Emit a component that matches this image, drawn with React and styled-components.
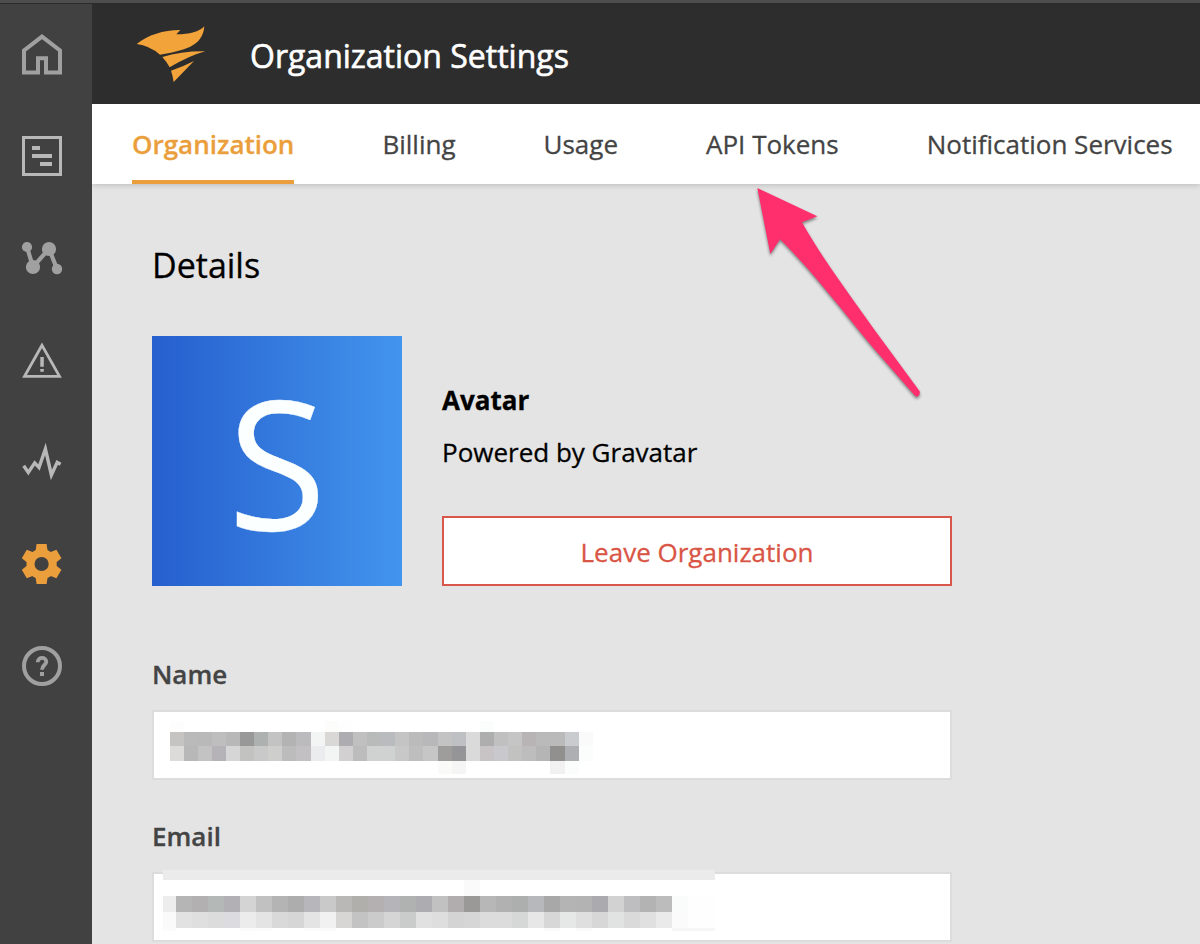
import React from "react";
import styled, { createGlobalStyle } from "styled-components";

const GlobalStyle = createGlobalStyle`
  * { box-sizing: border-box; }
  body {
    margin: 0;
    overflow: hidden;
    background: #e4e4e4;
    font-family: "Open Sans", "Noto Sans", sans-serif;
    font-size: 26px;
    color: #000;
    -webkit-text-stroke: 0.3px currentColor;
  }
`;

const Page = styled.div`
  height: 944px;
  display: flex;
  flex-direction: column;
  overflow: hidden;
`;

const WindowEdge = styled.div`
  flex: none;
  height: 4px;
  background: #4e4e4e;
  border-bottom: 1px solid #2b2b2b;
`;

const Body = styled.div`
  flex: 1;
  min-height: 0;
  display: flex;
`;

const Sidebar = styled.nav`
  position: relative;
  z-index: 1;
  flex: none;
  width: 92px;
  padding: 30px 0 0 22px;
  background: #414141;
  display: flex;
  flex-direction: column;
  gap: 62px;
`;

const NavIcon = styled.svg`
  flex: none;
  display: block;
  width: 40px;
  height: 40px;
  overflow: visible;
  color: ${(p) => p.$tone || "#a0a0a0"};
`;

const Main = styled.main`
  flex: 1;
  min-width: 0;
  display: flex;
  flex-direction: column;
`;

const Header = styled.header`
  position: relative;
  z-index: 1;
  flex: none;
  height: 100px;
  padding-left: 44px;
  background: #2d2d2d;
  display: flex;
  align-items: center;
  gap: 44px;
`;

const Logo = styled.svg`
  display: block;
  width: 70px;
  height: 56px;
  fill: #f2a33a;
`;

const Title = styled.h1`
  margin: 4px 0 0;
  font-size: 32px;
  font-weight: 400;
  line-height: 44px;
  color: #fff;
  white-space: nowrap;
  -webkit-text-stroke-width: 0.6px;
`;

const Tabs = styled.div`
  flex: none;
  height: 80px;
  padding-left: 40px;
  background: #fff;
  display: flex;
  gap: 88px;
  box-shadow: 0 1px 6px rgba(0, 0, 0, 0.18);
`;

const Tab = styled.a`
  height: 80px;
  line-height: 80px;
  white-space: nowrap;
  color: ${(p) => (p.$active ? "#eb9f3c" : "#444")};
  font-weight: ${(p) => (p.$active ? 600 : 400)};
  box-shadow: ${(p) => (p.$active ? "inset 0 -4px #eb9f3c" : "none")};
`;

const Content = styled.section`
  padding: 57px 60px 0;
  display: flex;
  flex-direction: column;
`;

const SectionTitle = styled.h2`
  margin: 0 0 47px;
  font-size: 34px;
  line-height: 48px;
  font-weight: 400;
`;

const Profile = styled.div`
  width: 800px;
  height: 250px;
  display: flex;
  gap: 40px;
`;

const Avatar = styled.div`
  flex: none;
  width: 250px;
  height: 250px;
  background: linear-gradient(90deg, #265fce, #2f70d8 33%, #3983e2 66%, #4294ef);
  color: #fbffff;
  font-size: 180px;
  line-height: 250px;
  text-align: center;
`;

const ProfileInfo = styled.div`
  flex: 1;
  display: flex;
  flex-direction: column;
  justify-content: flex-end;
`;

const AvatarTitle = styled.div`
  font-weight: 700;
  line-height: 36px;
`;

const AvatarNote = styled.div`
  margin: 16px 0 46px;
  line-height: 36px;
`;

const LeaveButton = styled.button`
  height: 70px;
  padding: 2px 0 0;
  border: 2px solid #d9574a;
  background: #fff;
  color: #d95545;
  font: inherit;
`;

const Field = styled.div`
  width: 800px;
  margin-top: ${(p) => p.$top}px;
`;

const Label = styled.div`
  line-height: 36px;
  margin-bottom: 18px;
  font-weight: 600;
  color: #444;
`;

const Input = styled.div`
  position: relative;
  height: 70px;
  border: 2px solid #dcdcdc;
  background: #fff;
`;

const Redaction = styled.div`
  position: absolute;
  left: ${(p) => p.$left}px;
  top: ${(p) => p.$top}px;
`;

const RedactionRow = styled.div`
  display: flex;
  height: ${(p) => p.$height}px;
`;

const Cell = styled.i`
  flex: none;
  width: ${(p) => p.$width}px;
  background: ${(p) => p.$color};
`;

const Pointer = styled.svg`
  position: absolute;
  left: 740px;
  top: 170px;
  width: 200px;
  height: 240px;
  filter: drop-shadow(0 2px 1.5px rgba(0, 0, 0, 0.45));
`;

const sparse = (count, marks) =>
  Array.from({ length: count }, (_, i) => marks[i] || "fff");

const nameRows = [
  { height: 11, cells: sparse(30, { 0: "fdfdfd", 11: "fcfcfa", 12: "fefefe", 22: "fbfdfc" }) },
  {
    height: 14,
    cells: "c5c4c2 bababa b9b9b9 bebebe b8b8b8 989898 adb1b0 c3c3c3 b3b3b3 bbbabd f3f5f4 d9d8d6 adadb1 c0c0c0 b9bbba b9bbbe c4c4c4 bbbbbb b8b8bb c3c3c3 bfc0c3 dadada aeaeae c0c0c0 c5c5c5 b8b4b5 bababa bababa cacbce fafafa".split(" "),
  },
  {
    height: 15,
    cells: "dcdbda b8b8b8 c3c3c3 b5b3b7 d6d6d6 c2c2c0 c9c9c9 cececc bcbcbc c3c0c3 ebecee f3f5f4 d3d0d2 bcbcbc cfd2d1 cfd2d1 c8c8c8 bebebe c6c6c6 9e9d9b 959597 dadada c8c4c6 c9c9cd c2c3c0 bdbdbd b5b5b5 91908e adafb2 fbfdfc".split(" "),
  },
  { height: 13, cells: sparse(30, { 19: "fafaf9", 20: "f5f5f5", 27: "f1f1f1", 28: "fbfdfd" }) },
];

const emailRows = [
  { height: 10, cells: Array(35).fill("ebebeb") },
  { height: 16, cells: sparse(35, { 19: "fafafa" }) },
  {
    height: 16,
    cells: "ededed b5b5b5 b3b0b1 b4b8b6 b2b0b4 d4d4d4 c1c1c1 b4b4b4 adadad b7b7bb c9c9c9 b9b8b6 b0afac b4b0b1 b5b5b9 afb2b1 adadb1 c1c1c1 b1adaf 9b9898 b7b7b7 b1b1b1 acafad b6b8bb a8a8a8 b4b4b4 b3b3b3 ababaf d2d2d2 bebec1 b3b3b3 bcbcbc f9fcfb fefefe fefefe".split(" "),
  },
  {
    height: 16,
    cells: "fafafa e2e2e2 dfdfdf dcdcdc dcdce0 ececec e4e4e4 d9d9d9 d6d6d6 e4e4e4 f1f1f1 d7d6d4 c3c3c3 cbcbcb d5d5d5 c9cccb e1e1e1 dedede d4d4d4 d6d6d6 dcdcdc dcdcdc d5d8d6 e7e7e7 d7d7d7 e5e8e7 dfdfdf d7d7d7 e0e3e2 dadada e0e0e0 eaeaea fbfbfb fefefe fefefe".split(" "),
  },
  { height: 3, cells: sparse(35, { 0: "fbfbfb", 5: "fbfbfb", 6: "fcfcfc", 9: "fcfcfc", 10: "fafafa", 24: "fafafa", 26: "fafafa", 32: "f6f6f6", 33: "f6f6f6", 34: "f6f6f6" }) },
];

function Mosaic({ rows, left, top, widthOf }) {
  return (
    <Redaction $left={left} $top={top}>
      {rows.map((row, r) => (
        <RedactionRow key={r} $height={row.height}>
          {row.cells.map((color, c) => (
            <Cell key={c} $width={widthOf(c)} $color={`#${color}`} />
          ))}
        </RedactionRow>
      ))}
    </Redaction>
  );
}

const nameCell = () => 14.12;
const emailCell = (c) => (c === 0 ? 13 : c === 34 ? 11 : 16);

function SidebarIcons() {
  return (
    <Sidebar>
      <NavIcon viewBox="0 0 40 40">
        <path d="M2 38.4V16.4L20 2.6L38 16.4V38.4H24V24.2H16V38.4Z" fill="none" stroke="currentColor" strokeWidth="4" />
      </NavIcon>
      <NavIcon viewBox="0 0 40 40" $tone="#b8b8b8">
        <rect x="1.5" y="1.5" width="37" height="37" fill="none" stroke="currentColor" strokeWidth="3" />
        <path d="M10 10h8v4h-8zM10 18h20v4H10zM18 26h12v4H18z" fill="currentColor" />
      </NavIcon>
      <NavIcon viewBox="0 0 40 40">
        <path d="M5 9L11 29L27 10.7L35 31" fill="none" stroke="currentColor" strokeWidth="4.2" />
        <g fill="currentColor">
          <circle cx="5" cy="9" r="5.1" />
          <circle cx="27" cy="11" r="7.1" />
          <circle cx="11" cy="29" r="7.1" />
          <circle cx="35" cy="31" r="5.2" />
        </g>
      </NavIcon>
      <NavIcon viewBox="0 0 40 40" $tone="#b8b8b8">
        <path d="M20 5.3L2.5 36.4H37.5Z" fill="none" stroke="currentColor" strokeWidth="2.8" />
        <path d="M18.3 17h3.5v9.8h-3.5zM18.3 29h3.5v2.8h-3.5z" fill="currentColor" />
      </NavIcon>
      <NavIcon viewBox="0 0 40 40" $tone="#b8b8b8">
        <path d="M1.7 23.8L6.3 30.4L12.7 20.9L17 25.5L23.4 7L29.4 33L35.2 20.4L38.6 22.3" fill="none" stroke="currentColor" strokeWidth="3.4" />
      </NavIcon>
      <NavIcon viewBox="0 0 40 40" $tone="#eb9f3c">
        <g transform="translate(19.6 20)" fill="currentColor">
          <circle r="11.1" fill="none" stroke="currentColor" strokeWidth="8" />
          {[0, 60, 120, 180, 240, 300].map((a) => (
            <path key={a} transform={`rotate(${a})`} d="M-5 -20H5L6.2 -12H-6.2Z" />
          ))}
        </g>
      </NavIcon>
      <NavIcon viewBox="0 0 40 40">
        <circle cx="20" cy="20" r="18" fill="none" stroke="currentColor" strokeWidth="4" />
        <path d="M15.8 16.2V15.7C15.8 10.7 24.3 10.7 24.3 15.8C24.3 19.2 20 19 20 23.8" fill="none" stroke="currentColor" strokeWidth="3.8" />
        <path d="M18 26h4v4h-4z" fill="currentColor" />
      </NavIcon>
    </Sidebar>
  );
}

const tabs = ["Organization", "Billing", "Usage", "API Tokens", "Notification Services"];

export default function App() {
  return (
    <Page>
      <GlobalStyle />
      <WindowEdge />
      <Body>
        <SidebarIcons />
        <Main>
          <Header>
            <Logo viewBox="408 78 210 168">
              <path d="M410 132Q462 91 541 90L529 103Q590 103 613 79C609 142 545 153 480 164Q449 137 410 132Z" />
              <path d="M487 171Q545 153 616 154Q568 167 509 202Q500 185 487 171Z" />
              <path d="M513 212Q547 201 582 183L521 246Q518 226 513 212Z" />
            </Logo>
            <Title>Organization Settings</Title>
          </Header>
          <Tabs>
            {tabs.map((tab, i) => (
              <Tab key={tab} $active={i === 0}>{tab}</Tab>
            ))}
          </Tabs>
          <Content>
            <SectionTitle>Details</SectionTitle>
            <Profile>
              <Avatar>S</Avatar>
              <ProfileInfo>
                <AvatarTitle>Avatar</AvatarTitle>
                <AvatarNote>Powered by Gravatar</AvatarNote>
                <LeaveButton>Leave Organization</LeaveButton>
              </ProfileInfo>
            </Profile>
            <Field $top={70}>
              <Label>Name</Label>
              <Input>
                <Mosaic rows={nameRows} left={15.5} top={9} widthOf={nameCell} />
              </Input>
            </Field>
            <Field $top={38}>
              <Label>Email</Label>
              <Input>
                <Mosaic rows={emailRows} left={9} top={-4} widthOf={emailCell} />
              </Input>
            </Field>
          </Content>
        </Main>
      </Body>
      <Pointer viewBox="0 0 600 720">
        <path
          d="M52 54L232 139L186 157C240 255 330 375 400 475L539 664Q542 676 531 680Q527 680 523 675L400 534C310 425 210 295 120 208L91 252Z"
          fill="#ff2f6e"
        />
      </Pointer>
    </Page>
  );
}
